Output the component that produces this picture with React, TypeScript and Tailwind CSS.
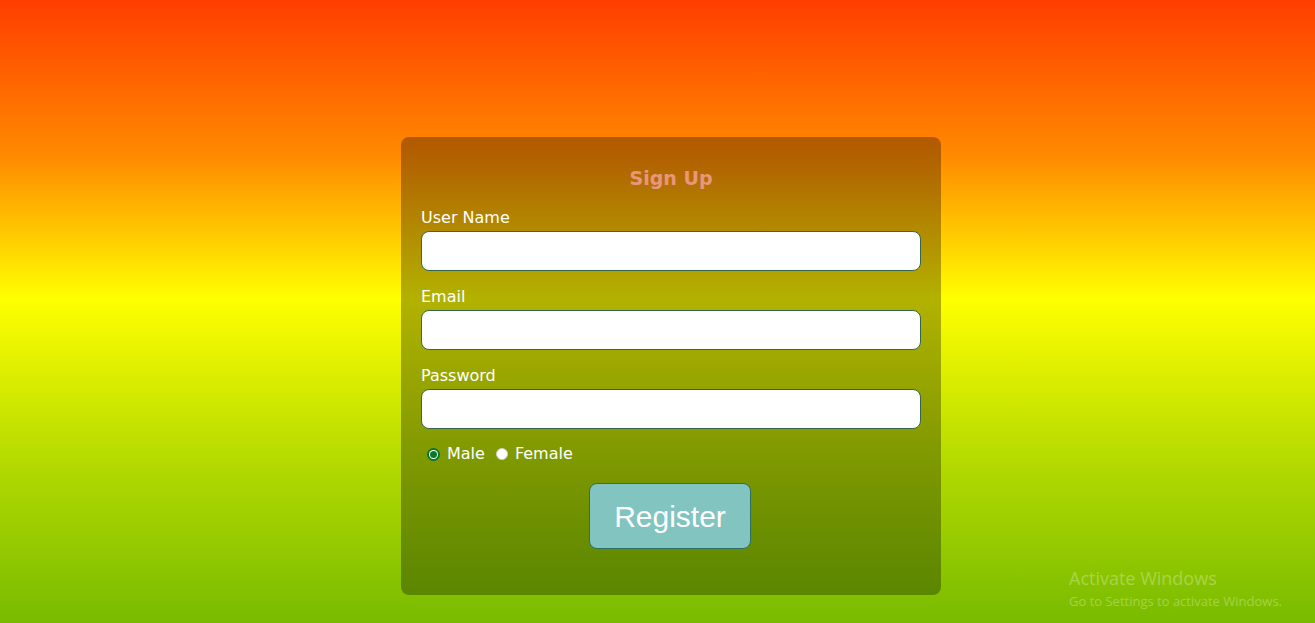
import React from "react";

function Field({ label, type }: { label: string; type: string }) {
  return (
    <div className="flex flex-col mb-[16px]">
      <label className="text-white text-[16px] leading-[20px] mb-[3px]">{label}</label>
      <input
        type={type}
        className="w-[500px] h-[40px] bg-white rounded-[8px] border border-[#35664a] outline-none px-2"
      />
    </div>
  );
}

export default function App() {
  return (
    <div
      className="w-full h-[623px] overflow-hidden relative bg-[linear-gradient(to_bottom,#ff3d00_0%,#ff8a00_25%,#ffff00_48%,#b2d900_75%,#78bb00_100%)]"
      style={{ fontFamily: '"DejaVu Sans", Verdana, sans-serif' }}
    >
      <div className="flex justify-center pl-[27px] pt-[137px]">
        <div className="w-[540px] h-[458px] rounded-[8px] bg-black/30 px-[20px] pt-[30px] flex flex-col">
          <h2 className="text-center font-bold text-[19px] leading-[23px] text-[#e9967a] mb-[18px]">
            Sign Up
          </h2>
          <Field label="User Name" type="text" />
          <Field label="Email" type="email" />
          <Field label="Password" type="password" />
          <div className="flex items-center -mt-[1px] pl-[6px] h-[20px] text-white text-[16px]">
            <span className="w-[13px] h-[13px] rounded-full bg-[#08782a] p-[2px] flex">
              <span className="w-full h-full rounded-full bg-white p-[1px] flex">
                <span className="w-full h-full rounded-full bg-[#08782a]" />
              </span>
            </span>
            <span className="ml-[7px]">Male</span>
            <span className="ml-[11px] w-[12px] h-[12px] rounded-full bg-white border border-[#cfcfcf]" />
            <span className="ml-[7px]">Female</span>
          </div>
          <div className="flex mt-[19px] pl-[168px]">
            <button
              className="w-[162px] h-[66px] rounded-[8px] bg-[#82c4c0] border border-[#2a7060] text-white text-[30px]"
              style={{ fontFamily: '"Liberation Sans", Arial, sans-serif' }}
            >
              Register
            </button>
          </div>
        </div>
      </div>
      <div
        className="absolute left-[1069px] top-[566px] text-white/30"
        style={{ fontFamily: '"Open Sans", "Noto Sans", sans-serif' }}
      >
        <div className="text-[18px] leading-[24px]">Activate Windows</div>
        <div className="text-[13px] leading-[18px] mt-[2px]">Go to Settings to activate Windows.</div>
      </div>
    </div>
  );
}
